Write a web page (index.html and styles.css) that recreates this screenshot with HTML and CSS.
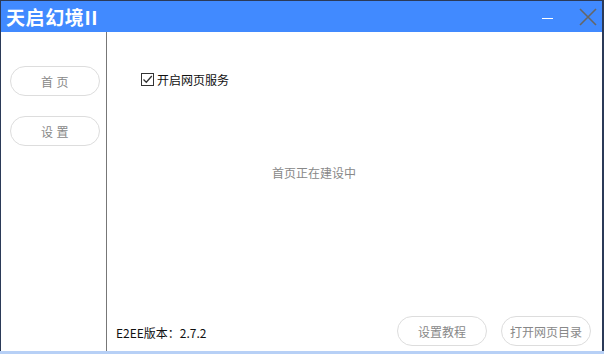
FILE: index.html
```html
<!DOCTYPE html>
<html lang="zh-CN">
<head>
    <meta charset="UTF-8">
    <title>天启幻境II</title>
    <link rel="stylesheet" href="styles.css">
</head>
<body>
<div class="desktop">
    <div class="window">
        <div class="titlebar">
            <span class="title">天启幻境II</span>
            <span class="min"></span>
            <svg class="close" width="18" height="18" viewBox="0 0 18 18">
                <path d="M1 1 L17 17 M17 1 L1 17" stroke="#666" stroke-width="1.6" fill="none"/>
            </svg>
        </div>
        <div class="main">
            <div class="sidebar">
                <button class="pill nav">首 页</button>
                <button class="pill nav">设 置</button>
            </div>
            <div class="content">
                <label class="check">
                    <span class="box">
                        <svg width="11" height="11" viewBox="0 0 11 11">
                            <path d="M1.5 5.5 L4.3 8.3 L9.8 2" stroke="#333" stroke-width="1.3" fill="none"/>
                        </svg>
                    </span>
                    开启网页服务
                </label>
                <div class="placeholder">首页正在建设中</div>
                <div class="footer">
                    <span class="version">E2EE版本：2.7.2</span>
                    <button class="pill">设置教程</button>
                    <button class="pill">打开网页目录</button>
                </div>
            </div>
        </div>
    </div>
    <div class="taskbar"></div>
</div>
</body>
</html>
```

FILE: styles.css
```css
body {
    margin: 0;
    font-family: "Noto Sans CJK SC", "Noto Sans", sans-serif;
    background: #2b3a58;
}
.desktop { width: 604px; height: 354px; overflow: hidden; }
.window {
    margin: 1px 0 0 1px;
    width: 601px;
    height: 350px;
    background: #fff;
    display: flex;
    flex-direction: column;
}
.taskbar { height: 3px; background: #b7d0f6; }
.titlebar {
    height: 31px;
    background: #418aff;
    display: flex;
    align-items: center;
    padding-left: 5px;
}
.title {
    color: #fff;
    font-weight: bold;
    font-size: 19px;
    letter-spacing: 0.6px;
    line-height: 31px;
    flex: 1;
}
.min {
    width: 11px;
    height: 1px;
    background: #fff;
    margin: 4px 26px 0 0;
}
.close { margin-right: 5px; }
.main { flex: 1; display: flex; }
.sidebar {
    width: 106px;
    border-right: 1px solid #777;
    display: flex;
    flex-direction: column;
    align-items: flex-start;
    gap: 20px;
    padding: 34px 0 0 9px;
    box-sizing: border-box;
}
.pill {
    width: 90px;
    height: 30px;
    border: 1px solid #ddd;
    border-radius: 15px;
    background: #fff;
    color: #888;
    font-family: inherit;
    font-size: 12px;
    padding: 0;
}
.nav { letter-spacing: 0.5px; }
.content {
    flex: 1;
    position: relative;
    display: flex;
    flex-direction: column;
}
.check {
    display: flex;
    align-items: center;
    font-size: 12px;
    color: #111;
    margin: 39px 0 0 34px;
    gap: 3px;
}
.box {
    width: 11px;
    height: 11px;
    border: 1px solid #333;
    display: flex;
}
.placeholder {
    font-size: 12px;
    color: #888;
    margin: 76px 0 0 165px;
}
.footer {
    margin-top: auto;
    display: flex;
    align-items: center;
    padding: 0 11px 5px 9px;
    gap: 14px;
}
.version { font-size: 12px; color: #111; flex: 1; padding-top: 2px; }
```
